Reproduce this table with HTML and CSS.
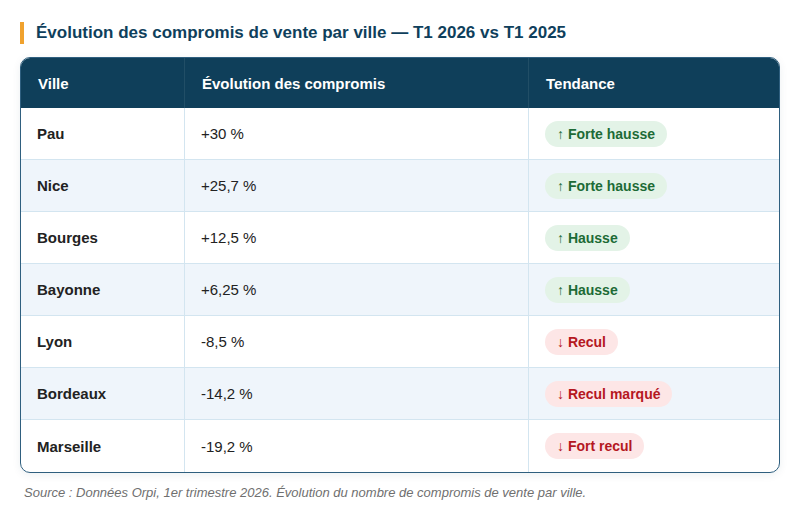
FILE: index.html
```html
<!DOCTYPE html>
<html lang="fr">
<head>
<meta charset="utf-8">
<link rel="stylesheet" href="styles.css">
</head>
<body>
<div class="wrap">
  <h2 class="title">Évolution des compromis de vente par ville — T1 2026 vs T1 2025</h2>
  <div class="card">
    <table class="tbl">
      <thead>
        <tr><th class="c1">Ville</th><th class="c2">Évolution des compromis</th><th>Tendance</th></tr>
      </thead>
      <tbody>
        <tr><td class="city">Pau</td><td>+30 %</td><td><span class="badge up">↑ Forte hausse</span></td></tr>
        <tr><td class="city">Nice</td><td>+25,7 %</td><td><span class="badge up">↑ Forte hausse</span></td></tr>
        <tr><td class="city">Bourges</td><td>+12,5 %</td><td><span class="badge up">↑ Hausse</span></td></tr>
        <tr><td class="city">Bayonne</td><td>+6,25 %</td><td><span class="badge up">↑ Hausse</span></td></tr>
        <tr><td class="city">Lyon</td><td>-8,5 %</td><td><span class="badge down">↓ Recul</span></td></tr>
        <tr><td class="city">Bordeaux</td><td>-14,2 %</td><td><span class="badge down">↓ Recul marqué</span></td></tr>
        <tr><td class="city">Marseille</td><td>-19,2 %</td><td><span class="badge down">↓ Fort recul</span></td></tr>
      </tbody>
    </table>
  </div>
  <p class="source">Source : Données Orpi, 1er trimestre 2026. Évolution du nombre de compromis de vente par ville.</p>
</div>
</body>
</html>
```
FILE: styles.css
```css
html, body {
  margin: 0;
  padding: 0;
  background: #ffffff;
  font-family: "Liberation Sans", Arial, sans-serif;
}
.wrap {
  padding: 22px 20px 0 20px;
}
.title {
  margin: 0 0 13px 0;
  font-size: 17px;
  line-height: 22px;
  font-weight: 700;
  color: #0f3f5c;
  border-left: 4px solid #f0a22e;
  padding-left: 12px;
}
.card {
  border: 1px solid #2f5f7f;
  border-radius: 10px;
  overflow: hidden;
  box-shadow: 0 2px 8px rgba(15, 63, 92, 0.08);
}
.tbl {
  width: 100%;
  border-collapse: collapse;
  font-size: 15px;
  color: #222;
}
.tbl th {
  background: #0f3f5a;
  color: #fff;
  text-align: left;
  font-weight: 700;
  height: 50px;
  padding: 0 17px;
  border-right: 1px solid rgba(255,255,255,0.08);
}
.tbl th:last-child { border-right: none; }
.c1 { width: 129px; }
.c2 { width: 309px; }
.tbl td {
  height: 51px;
  padding: 0 16px;
  border-right: 1px solid #d3e5f0;
  border-bottom: 1px solid #d3e5f0;
}
.tbl td:last-child { border-right: none; }
.tbl tbody tr:last-child td { border-bottom: none; height: 52px; }
.tbl tbody tr:nth-child(even) td { background: #eff5fb; }
.city { font-weight: 700; }
.badge {
  display: inline-block;
  padding: 5px 12px;
  border-radius: 14px;
  font-size: 14px;
  font-weight: 700;
  line-height: 16px;
}
.up { background: #e3f3e7; color: #1d6b36; }
.down { background: #fde6e6; color: #b5171f; }
.source {
  margin: 12px 0 0 4px;
  font-size: 13px;
  font-style: italic;
  color: #6f6f6f;
}
```
